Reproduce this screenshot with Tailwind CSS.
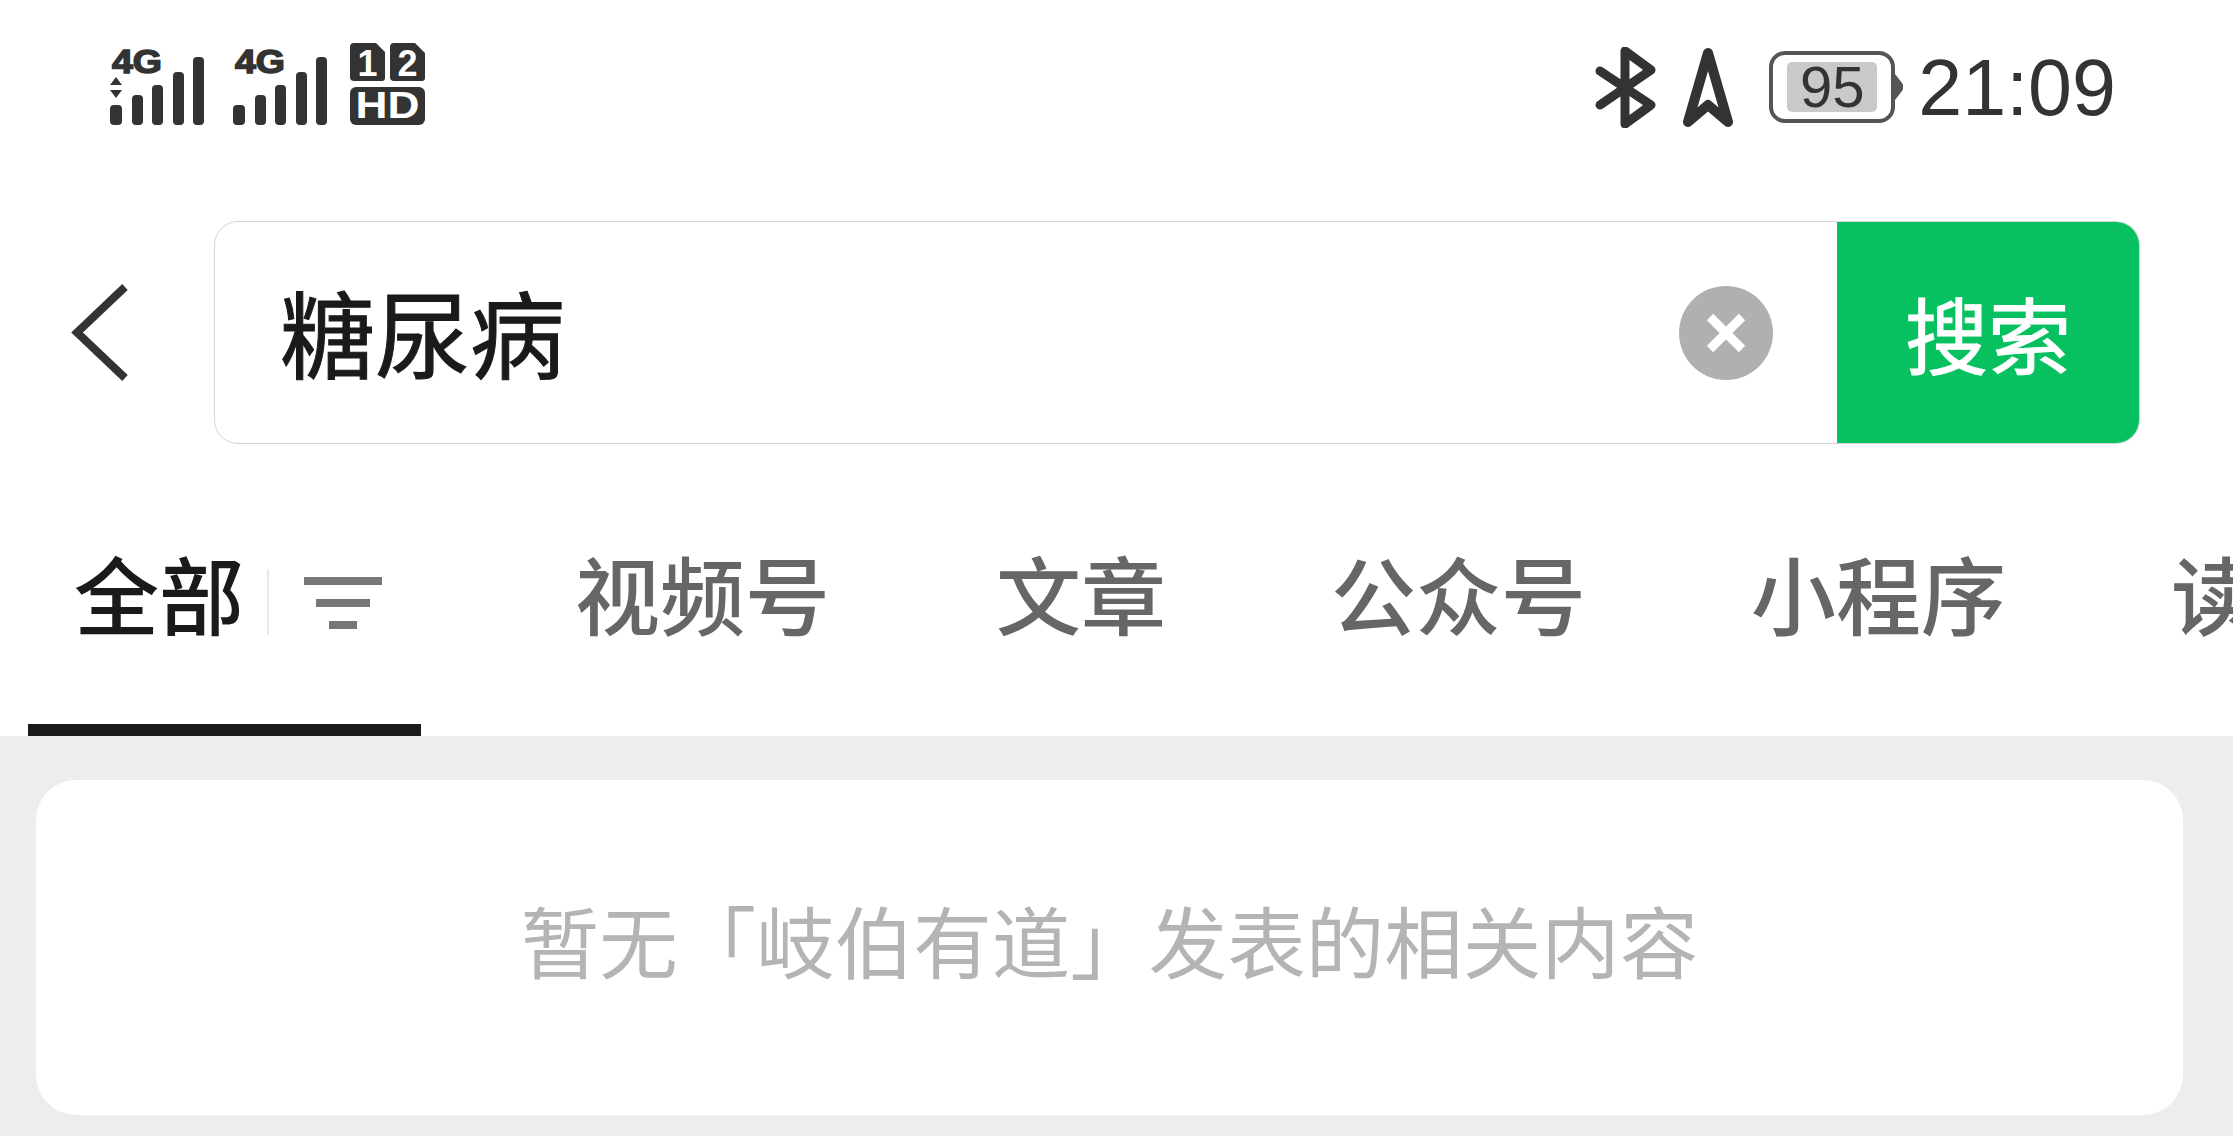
<!doctype html>
<html lang="zh-CN">
<head>
<meta charset="utf-8">
<script src="https://cdn.jsdelivr.net/npm/@tailwindcss/browser@4"></script>
</head>
<body class="m-0 bg-white">
<div class="w-[2233px] h-[1136px] overflow-hidden flex flex-col bg-white font-['Noto_Sans_CJK_SC','Noto_Sans',sans-serif]">
  <!-- status bar -->
  <div class="h-[174px] shrink-0 flex items-center justify-between pl-[110px] pr-[117px]">
    <div class="flex items-center mb-[8px]">
      <svg width="94" height="86" viewBox="0 0 94 86" fill="#333">
        <text x="2" y="33" font-family="Liberation Sans" font-weight="700" font-size="33" textLength="50" lengthAdjust="spacingAndGlyphs" stroke="#333" stroke-width="1.500">4G</text>
        <path d="M6 37l6 8H0zM6 58l6-8H0z"/>
        <rect x="0" y="65" width="12" height="20" rx="4"/>
        <rect x="22" y="55" width="11" height="30" rx="4"/>
        <rect x="42" y="45" width="11" height="40" rx="4"/>
        <rect x="63" y="32" width="11" height="53" rx="4"/>
        <rect x="83" y="17" width="11" height="68" rx="4"/>
      </svg>
      <svg width="94" height="86" viewBox="0 0 94 86" class="ml-[29px]" fill="#333">
        <text x="2" y="33" font-family="Liberation Sans" font-weight="700" font-size="33" textLength="50" lengthAdjust="spacingAndGlyphs" stroke="#333" stroke-width="1.500">4G</text>
        <rect x="0" y="65" width="12" height="20" rx="4"/>
        <rect x="22" y="55" width="11" height="30" rx="4"/>
        <rect x="42" y="45" width="11" height="40" rx="4"/>
        <rect x="63" y="32" width="11" height="53" rx="4"/>
        <rect x="83" y="17" width="11" height="68" rx="4"/>
      </svg>
      <svg width="75" height="86" viewBox="0 0 75 86" class="ml-[23px]">
        <path d="M4 3h22l9 9v26a3 3 0 0 1-3 3H4a4 4 0 0 1-4-3V7a4 4 0 0 1 4-4z" fill="#333"/>
        <path d="M44 3h21l10 10v25a3 3 0 0 1-3 3H44a4 4 0 0 1-4-3V7a4 4 0 0 1 4-4z" fill="#333"/>
        <rect x="0" y="47" width="75" height="38" rx="6" fill="#333"/>
        <text x="17.500" y="36" text-anchor="middle" font-family="Liberation Sans" font-weight="700" font-size="36" fill="#fff">1</text>
        <text x="57.500" y="36" text-anchor="middle" font-family="Liberation Sans" font-weight="700" font-size="36" fill="#fff">2</text>
        <text x="37.500" y="78" text-anchor="middle" font-family="Liberation Sans" font-weight="700" font-size="36" textLength="64" lengthAdjust="spacingAndGlyphs" fill="#fff">HD</text>
      </svg>
    </div>
    <div class="flex items-center">
      <svg width="61" height="81" viewBox="0 0 61 81" fill="none" stroke="#333" stroke-linecap="round" stroke-linejoin="round">
        <path d="M5 24L56 58 30 77V4l26 19L5 58" stroke-width="9"/>
      </svg>
      <svg width="52" height="81" viewBox="0 0 52 81" fill="none" stroke="#333" stroke-width="10" stroke-linejoin="round" stroke-linecap="round" class="ml-[26px]">
        <path d="M26 6L6 75l20-17 20 17z"/>
      </svg>
      <div class="ml-[35px] flex items-center">
        <div class="w-[126px] h-[72px] rounded-[16px] border-[4px] border-[#555] flex items-center justify-center">
          <div class="w-[90px] h-[50px] rounded-[5px] bg-[#c9c9c9] flex items-center justify-center font-['Liberation_Sans',sans-serif] text-[58px] leading-none text-[#333]">95</div>
        </div>
        <svg width="8" height="26" viewBox="0 0 8 26" fill="#555"><path d="M0 0l7 9a6 6 0 0 1 0 8L0 26z"/></svg>
      </div>
      <div class="ml-[15px] font-['Liberation_Sans',sans-serif] text-[79px] leading-none text-[#333]">21:09</div>
    </div>
  </div>

  <!-- search row -->
  <div class="mt-[47px] h-[223px] shrink-0 flex items-center pl-[71px]">
    <svg width="57" height="97" viewBox="0 0 57 97" fill="none" stroke="#333" stroke-width="8" class="shrink-0">
      <path d="M54 3L6 48.500l48 45.500"/>
    </svg>
    <div class="ml-[86px] w-[1926px] h-[223px] flex rounded-[24px] border border-[#d4d4d4] overflow-hidden bg-white">
      <div class="flex-1 flex items-center pl-[65px] pr-[64px] justify-between">
        <span class="text-[95px] leading-none text-[#1a1a1a] mb-[4px] [-webkit-text-stroke:1px_#1a1a1a]">糖尿病</span>
        <div class="w-[94px] h-[94px] rounded-full bg-[#b0b0b0] flex items-center justify-center">
          <svg width="40" height="40" viewBox="0 0 40 40" stroke="#fff" stroke-width="9"><path d="M4 4l32 32M36 4L4 36"/></svg>
        </div>
      </div>
      <div class="w-[302px] bg-[#07c160] flex items-center justify-center text-[83px] leading-none text-white [-webkit-text-stroke:1px_#ffffff]">搜索</div>
    </div>
  </div>

  <!-- tabs -->
  <div class="h-[292px] shrink-0 relative flex items-center pl-[74px] pt-[2px] overflow-hidden whitespace-nowrap text-[85px] leading-none text-[#666] font-medium">
    <span class="text-[#1a1a1a] shrink-0">全部</span>
    <div class="shrink-0 ml-[23px] mt-[22px] w-[2px] h-[66px] bg-[#e8e8e8]"></div>
    <svg width="78" height="52" viewBox="0 0 78 52" fill="#777" class="shrink-0 ml-[35px] mt-[24px]">
      <rect x="0" y="0" width="78" height="8"/>
      <rect x="12" y="22" width="54" height="8"/>
      <rect x="25" y="44" width="28" height="8"/>
    </svg>
    <span class="shrink-0 ml-[193px]">视频号</span>
    <span class="shrink-0 ml-[166px]">文章</span>
    <span class="shrink-0 ml-[165px]">公众号</span>
    <span class="shrink-0 ml-[165px]">小程序</span>
    <span class="shrink-0 ml-[165px]">读者</span>
    <div class="absolute left-[28px] bottom-[0px] w-[393px] h-[12px] bg-[#1a1a1a]"></div>
  </div>

  <!-- results -->
  <div class="flex-1 bg-[#ededed] pt-[44px] px-[36px]">
    <div class="w-[2147px] h-[335px] pb-[16px] rounded-[40px] bg-white flex items-center justify-center text-[78.500px] leading-none text-[#b4b4b4]">暂无「岐伯有道」发表的相关内容</div>
  </div>
</div>
</body>
</html>
